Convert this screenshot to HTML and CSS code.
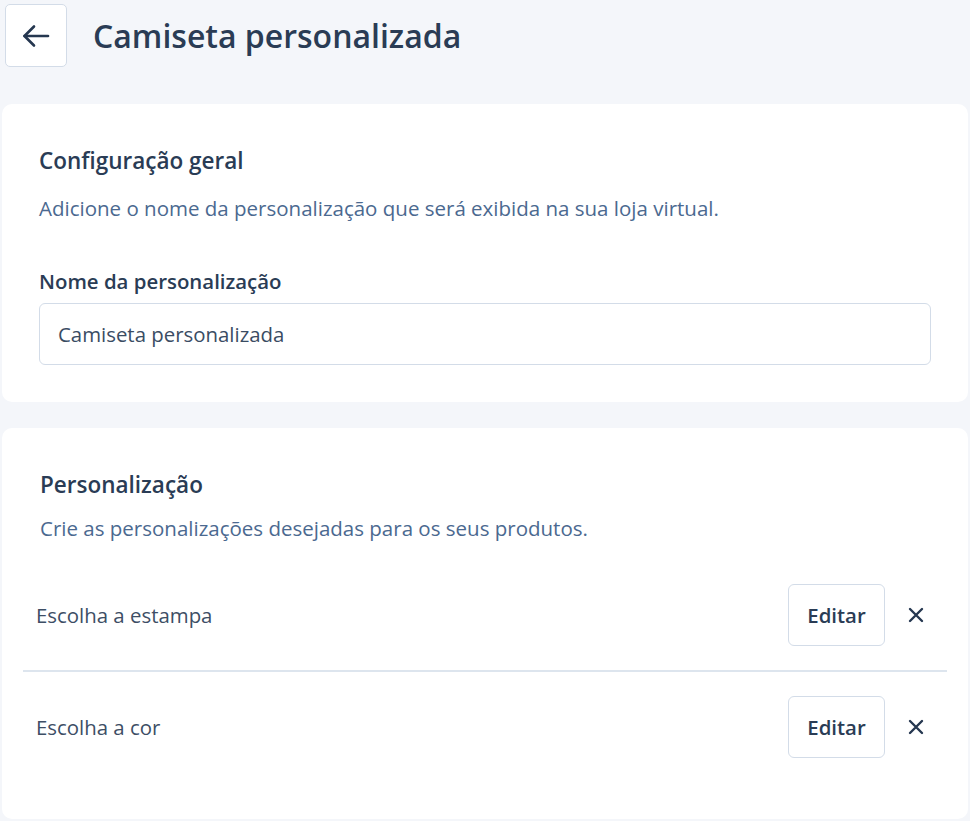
FILE: index.html
```html
<!DOCTYPE html>
<html lang="pt-BR">
  <head>
    <meta charset="UTF-8" />
    <meta name="viewport" content="width=device-width, initial-scale=1.0" />
    <title>Camiseta personalizada</title>
    <link rel="stylesheet" href="styles.css">
  </head>
  <body>
    <div class="page">
      <header class="top">
        <button class="back" type="button" aria-label="Voltar">
          <svg width="28" height="24" viewBox="0 0 28 24" fill="none" stroke="currentColor" stroke-width="2.6" stroke-linecap="round" stroke-linejoin="round">
            <path d="M26 12H2.5" />
            <path d="M12 2.5 2.5 12l9.5 9.5" />
          </svg>
        </button>
        <h1 class="title">Camiseta personalizada</h1>
      </header>

      <section class="card card-config">
        <h2 class="card-title">Configuração geral</h2>
        <p class="card-desc">Adicione o nome da personalização que será exibida na sua loja virtual.</p>
        <label class="field-label" for="nome">Nome da personalização</label>
        <input class="field" id="nome" type="text" value="Camiseta personalizada" />
      </section>

      <section class="card card-list">
        <div class="card-head">
          <h2 class="card-title">Personalização</h2>
          <p class="card-desc">Crie as personalizações desejadas para os seus produtos.</p>
        </div>
        <ul class="items">
          <li class="item">
            <span class="item-name">Escolha a estampa</span>
            <button class="edit" type="button">Editar</button>
            <button class="remove" type="button" aria-label="Remover">
              <svg width="16" height="16" viewBox="0 0 16 16" fill="none" stroke="currentColor" stroke-width="2.4" stroke-linecap="round">
                <path d="M2 2l12 12M14 2 2 14" />
              </svg>
            </button>
          </li>
          <li class="item">
            <span class="item-name">Escolha a cor</span>
            <button class="edit" type="button">Editar</button>
            <button class="remove" type="button" aria-label="Remover">
              <svg width="16" height="16" viewBox="0 0 16 16" fill="none" stroke="currentColor" stroke-width="2.4" stroke-linecap="round">
                <path d="M2 2l12 12M14 2 2 14" />
              </svg>
            </button>
          </li>
        </ul>
      </section>
    </div>
  </body>
</html>
```

FILE: styles.css
```css
* {
  margin: 0;
  padding: 0;
  box-sizing: border-box;
}
body {
  background-color: #f4f6fa;
  font-family: "Open Sans", "Noto Sans", sans-serif;
  color: #253750;
}
.page {
  padding: 4px 2px 0;
}
.top {
  display: flex;
  align-items: center;
  gap: 26px;
  padding-left: 3px;
}
.back {
  width: 62px;
  height: 63px;
  display: flex;
  align-items: center;
  justify-content: center;
  background-color: #fff;
  border: 1px solid #d3dce8;
  border-radius: 5px;
  color: #253750;
  cursor: pointer;
}
.title {
  font-size: 32px;
  font-weight: 600;
  line-height: 44px;
  color: #2a3c55;
}
.card {
  background-color: #fff;
  border-radius: 10px;
  margin-top: 37px;
}
.card-config {
  padding: 40px 37px 37px;
}
.card-list {
  margin-top: 26px;
  padding: 40px 21px 37px;
}
.card-list .card-head {
  padding: 0 17px;
}
.card-title {
  font-size: 22.5px;
  font-weight: 600;
  line-height: 34px;
  color: #2a3c55;
}
.card-desc {
  margin-top: 12px;
  font-size: 20.5px;
  line-height: 28px;
  color: #4b6990;
}
.card-config .card-desc {
  margin-top: 16px;
}
.field-label {
  display: block;
  margin-top: 45px;
  font-size: 20.4px;
  font-weight: 600;
  line-height: 28px;
  color: #2a3c55;
}
.field {
  display: block;
  width: 100%;
  height: 62px;
  margin-top: 8px;
  padding: 0 18px;
  border: 1px solid #d3dce8;
  border-radius: 6px;
  font-family: inherit;
  font-size: 20.4px;
  color: #3a4c63;
  outline: none;
}
.items {
  list-style: none;
  margin-top: 18px;
}
.item {
  display: flex;
  align-items: center;
  padding: 24px 0 24px 13px;
}
.item + .item {
  border-top: 2px solid #dde5ee;
}
.item-name {
  flex: 1;
  font-size: 20.4px;
  color: #3d4e65;
}
.edit {
  width: 97px;
  height: 62px;
  background-color: #fff;
  border: 1px solid #d3dce8;
  border-radius: 6px;
  font-family: inherit;
  font-size: 20.4px;
  font-weight: 600;
  color: #2a3c55;
  cursor: pointer;
}
.remove {
  width: 62px;
  height: 62px;
  display: flex;
  align-items: center;
  justify-content: center;
  background: none;
  border: 0;
  color: #253750;
  cursor: pointer;
}
```
